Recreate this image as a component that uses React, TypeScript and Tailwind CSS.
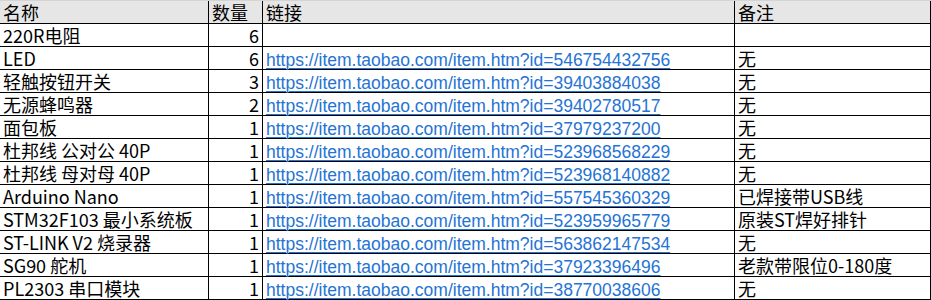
import React from "react";

type Row = { name: string; qty: string; link: string; note: string };

const rows: Row[] = [
  { name: "220R电阻", qty: "6", link: "", note: "" },
  { name: "LED", qty: "6", link: "https://item.taobao.com/item.htm?id=546754432756", note: "无" },
  { name: "轻触按钮开关", qty: "3", link: "https://item.taobao.com/item.htm?id=39403884038", note: "无" },
  { name: "无源蜂鸣器", qty: "2", link: "https://item.taobao.com/item.htm?id=39402780517", note: "无" },
  { name: "面包板", qty: "1", link: "https://item.taobao.com/item.htm?id=37979237200", note: "无" },
  { name: "杜邦线 公对公 40P", qty: "1", link: "https://item.taobao.com/item.htm?id=523968568229", note: "无" },
  { name: "杜邦线 母对母 40P", qty: "1", link: "https://item.taobao.com/item.htm?id=523968140882", note: "无" },
  { name: "Arduino Nano", qty: "1", link: "https://item.taobao.com/item.htm?id=557545360329", note: "已焊接带USB线" },
  { name: "STM32F103 最小系统板", qty: "1", link: "https://item.taobao.com/item.htm?id=523959965779", note: "原装ST焊好排针" },
  { name: "ST-LINK V2 烧录器", qty: "1", link: "https://item.taobao.com/item.htm?id=563862147534", note: "无" },
  { name: "SG90 舵机", qty: "1", link: "https://item.taobao.com/item.htm?id=37923396496", note: "老款带限位0-180度" },
  { name: "PL2303 串口模块", qty: "1", link: "https://item.taobao.com/item.htm?id=38770038606", note: "无" },
];

const font = {
  fontFamily: '"Noto Sans CJK SC", sans-serif',
};

export default function App() {
  return (
    <div className="w-[931px] h-[300px] bg-white text-black text-[18px] overflow-hidden" style={font}>
      <div className="grid grid-cols-[209px_54px_472px_196px] h-[24px] bg-[#e6e6e6] border-t border-t-[#d4d4d4] border-b border-b-black leading-[22px]">
        <div className="border-r border-black pl-[3px] whitespace-nowrap">名称</div>
        <div className="border-r border-black pl-[3px] whitespace-nowrap">数量</div>
        <div className="border-r border-black pl-[3px] whitespace-nowrap">链接</div>
        <div className="border-r border-black pl-[3px] whitespace-nowrap">备注</div>
      </div>
      {rows.map((r, i) => (
        <div key={i} className="grid grid-cols-[209px_54px_472px_196px] h-[23px] border-b border-black leading-[22px]">
          <div className="border-r border-black pl-[3px] whitespace-nowrap">{r.name}</div>
          <div className="border-r border-black pr-[3px] text-right whitespace-nowrap">{r.qty}</div>
          <div className="border-r border-black pl-[3px] whitespace-nowrap">
            {r.link && (
              <span className="font-['Liberation_Sans',sans-serif] text-[17.5px] text-[#2573d4] underline underline-offset-[2px] decoration-[1px]">
                {r.link}
              </span>
            )}
          </div>
          <div className="border-r border-black pl-[3px] whitespace-nowrap">{r.note}</div>
        </div>
      ))}
    </div>
  );
}
